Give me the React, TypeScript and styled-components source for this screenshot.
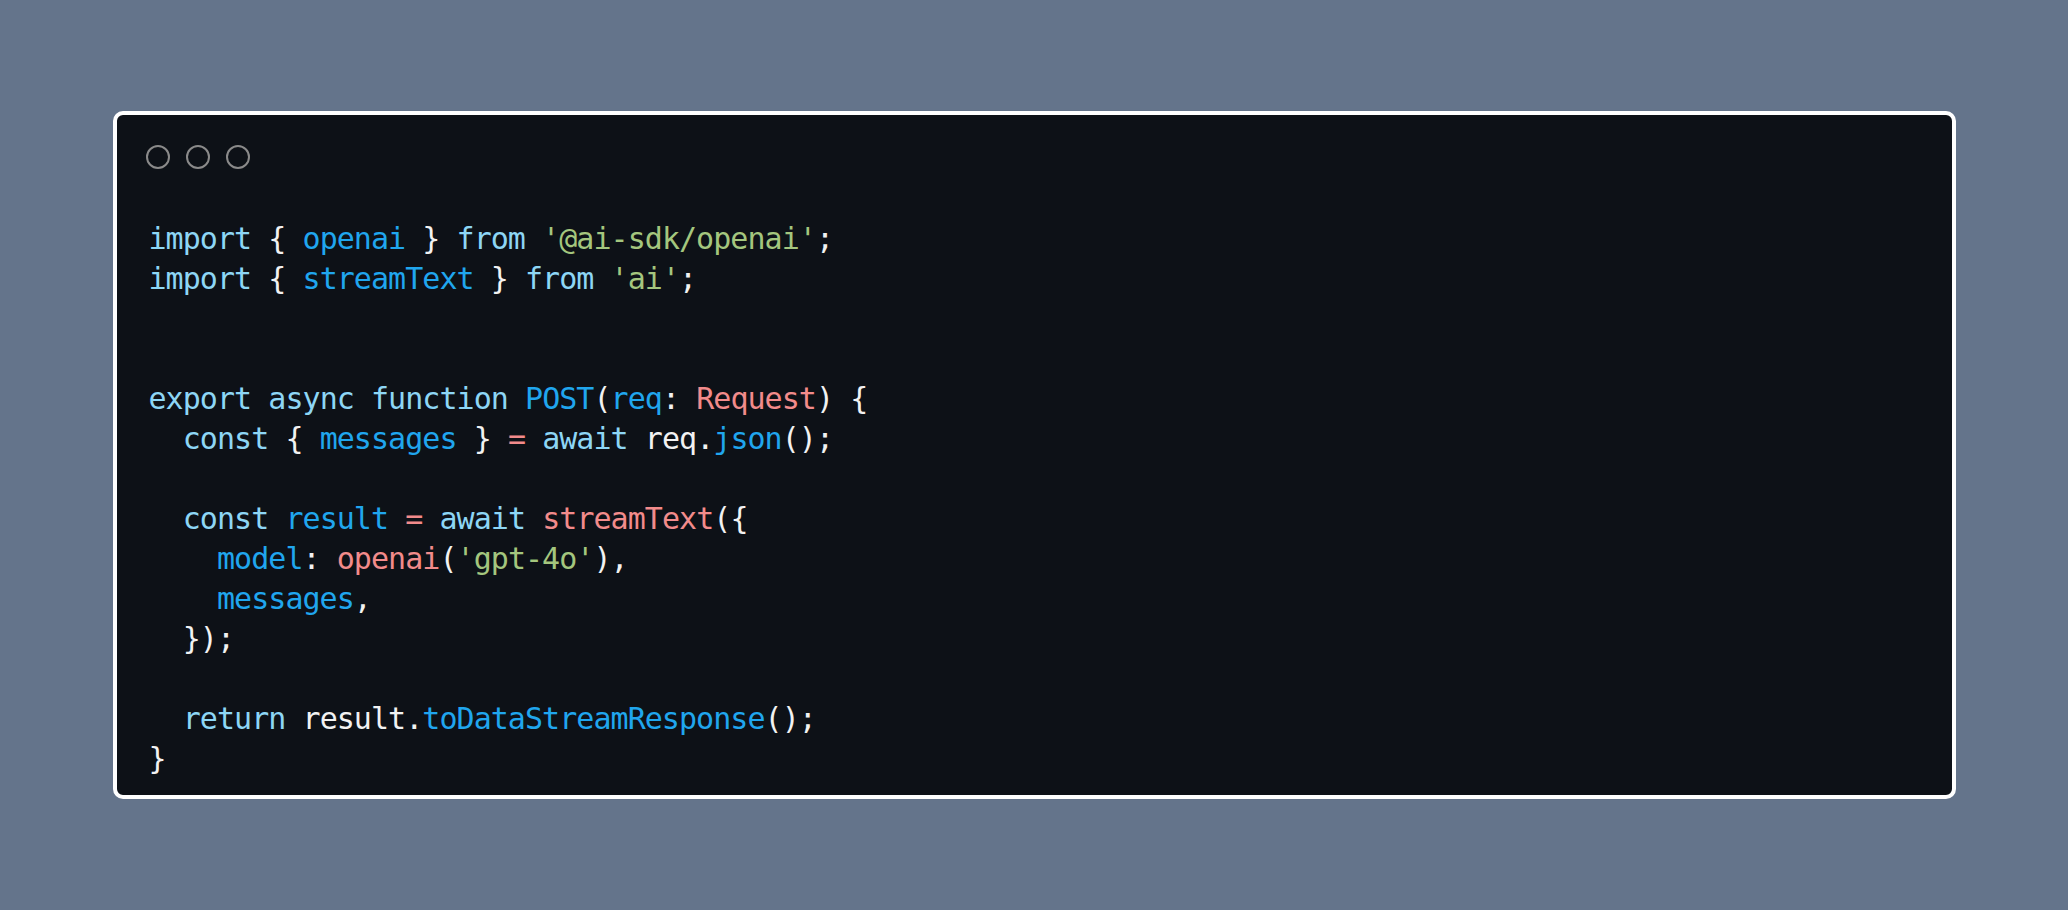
import React from "react";
import styled, { createGlobalStyle } from "styled-components";

const GlobalStyle = createGlobalStyle`
  html, body { margin: 0; padding: 0; }
  body { background: #64748b; }
`;

const Page = styled.div`
  height: 910px;
  display: flex;
  align-items: center;
  justify-content: center;
`;

const Window = styled.div`
  width: 1843px;
  box-sizing: border-box;
  background: #0d1117;
  border: 4px solid #ffffff;
  border-radius: 10px;
  padding: 30px 30px 16px 32px;
  display: flex;
  flex-direction: column;
  gap: 50px;
`;

const Dots = styled.div`
  display: flex;
  gap: 16px;
  margin-left: -3px;
`;

const Dot = styled.span`
  width: 24px;
  height: 24px;
  box-sizing: border-box;
  border-radius: 50%;
  border: 2px solid #8a8a8a;
`;

const Code = styled.pre`
  margin: 0;
  font-family: "DejaVu Sans Mono", "Liberation Mono", monospace;
  font-size: 30px;
  letter-spacing: -0.95px;
  line-height: 40px;
  color: #f0f0f0;
`;

const Line = styled.div`
  height: 40px;
  white-space: pre;
`;

type Kind = "kw" | "id" | "str" | "fn" | "p";

const colors: Record<Kind, string> = {
  kw: "#8dd6f5",
  id: "#20a6ee",
  str: "#a4c67e",
  fn: "#f28b8b",
  p: "#f2f2f2",
};

const Tok = styled.span<{ $k: Kind }>`
  color: ${(p) => colors[p.$k]};
`;

type T = [Kind, string];

const lines: T[][] = [
  [["kw", "import"], ["p", " { "], ["id", "openai"], ["p", " } "], ["kw", "from"], ["p", " "], ["str", "'@ai-sdk/openai'"], ["p", ";"]],
  [["kw", "import"], ["p", " { "], ["id", "streamText"], ["p", " } "], ["kw", "from"], ["p", " "], ["str", "'ai'"], ["p", ";"]],
  [],
  [],
  [["kw", "export"], ["p", " "], ["kw", "async"], ["p", " "], ["kw", "function"], ["p", " "], ["id", "POST"], ["p", "("], ["id", "req"], ["p", ": "], ["fn", "Request"], ["p", ") {"]],
  [["p", "  "], ["kw", "const"], ["p", " { "], ["id", "messages"], ["p", " } "], ["fn", "="], ["p", " "], ["kw", "await"], ["p", " req."], ["id", "json"], ["p", "();"]],
  [],
  [["p", "  "], ["kw", "const"], ["p", " "], ["id", "result"], ["p", " "], ["fn", "="], ["p", " "], ["kw", "await"], ["p", " "], ["fn", "streamText"], ["p", "({"]],
  [["p", "    "], ["id", "model"], ["p", ": "], ["fn", "openai"], ["p", "("], ["str", "'gpt-4o'"], ["p", "),"]],
  [["p", "    "], ["id", "messages"], ["p", ","]],
  [["p", "  });"]],
  [],
  [["p", "  "], ["kw", "return"], ["p", " result."], ["id", "toDataStreamResponse"], ["p", "();"]],
  [["p", "}"]],
];

export default function App() {
  return (
    <>
      <GlobalStyle />
      <Page>
        <Window>
          <Dots>
            <Dot />
            <Dot />
            <Dot />
          </Dots>
          <Code>
            {lines.map((l, i) => (
              <Line key={i}>
                {l.map(([k, s], j) => (
                  <Tok key={j} $k={k}>
                    {s}
                  </Tok>
                ))}
              </Line>
            ))}
          </Code>
        </Window>
      </Page>
    </>
  );
}
